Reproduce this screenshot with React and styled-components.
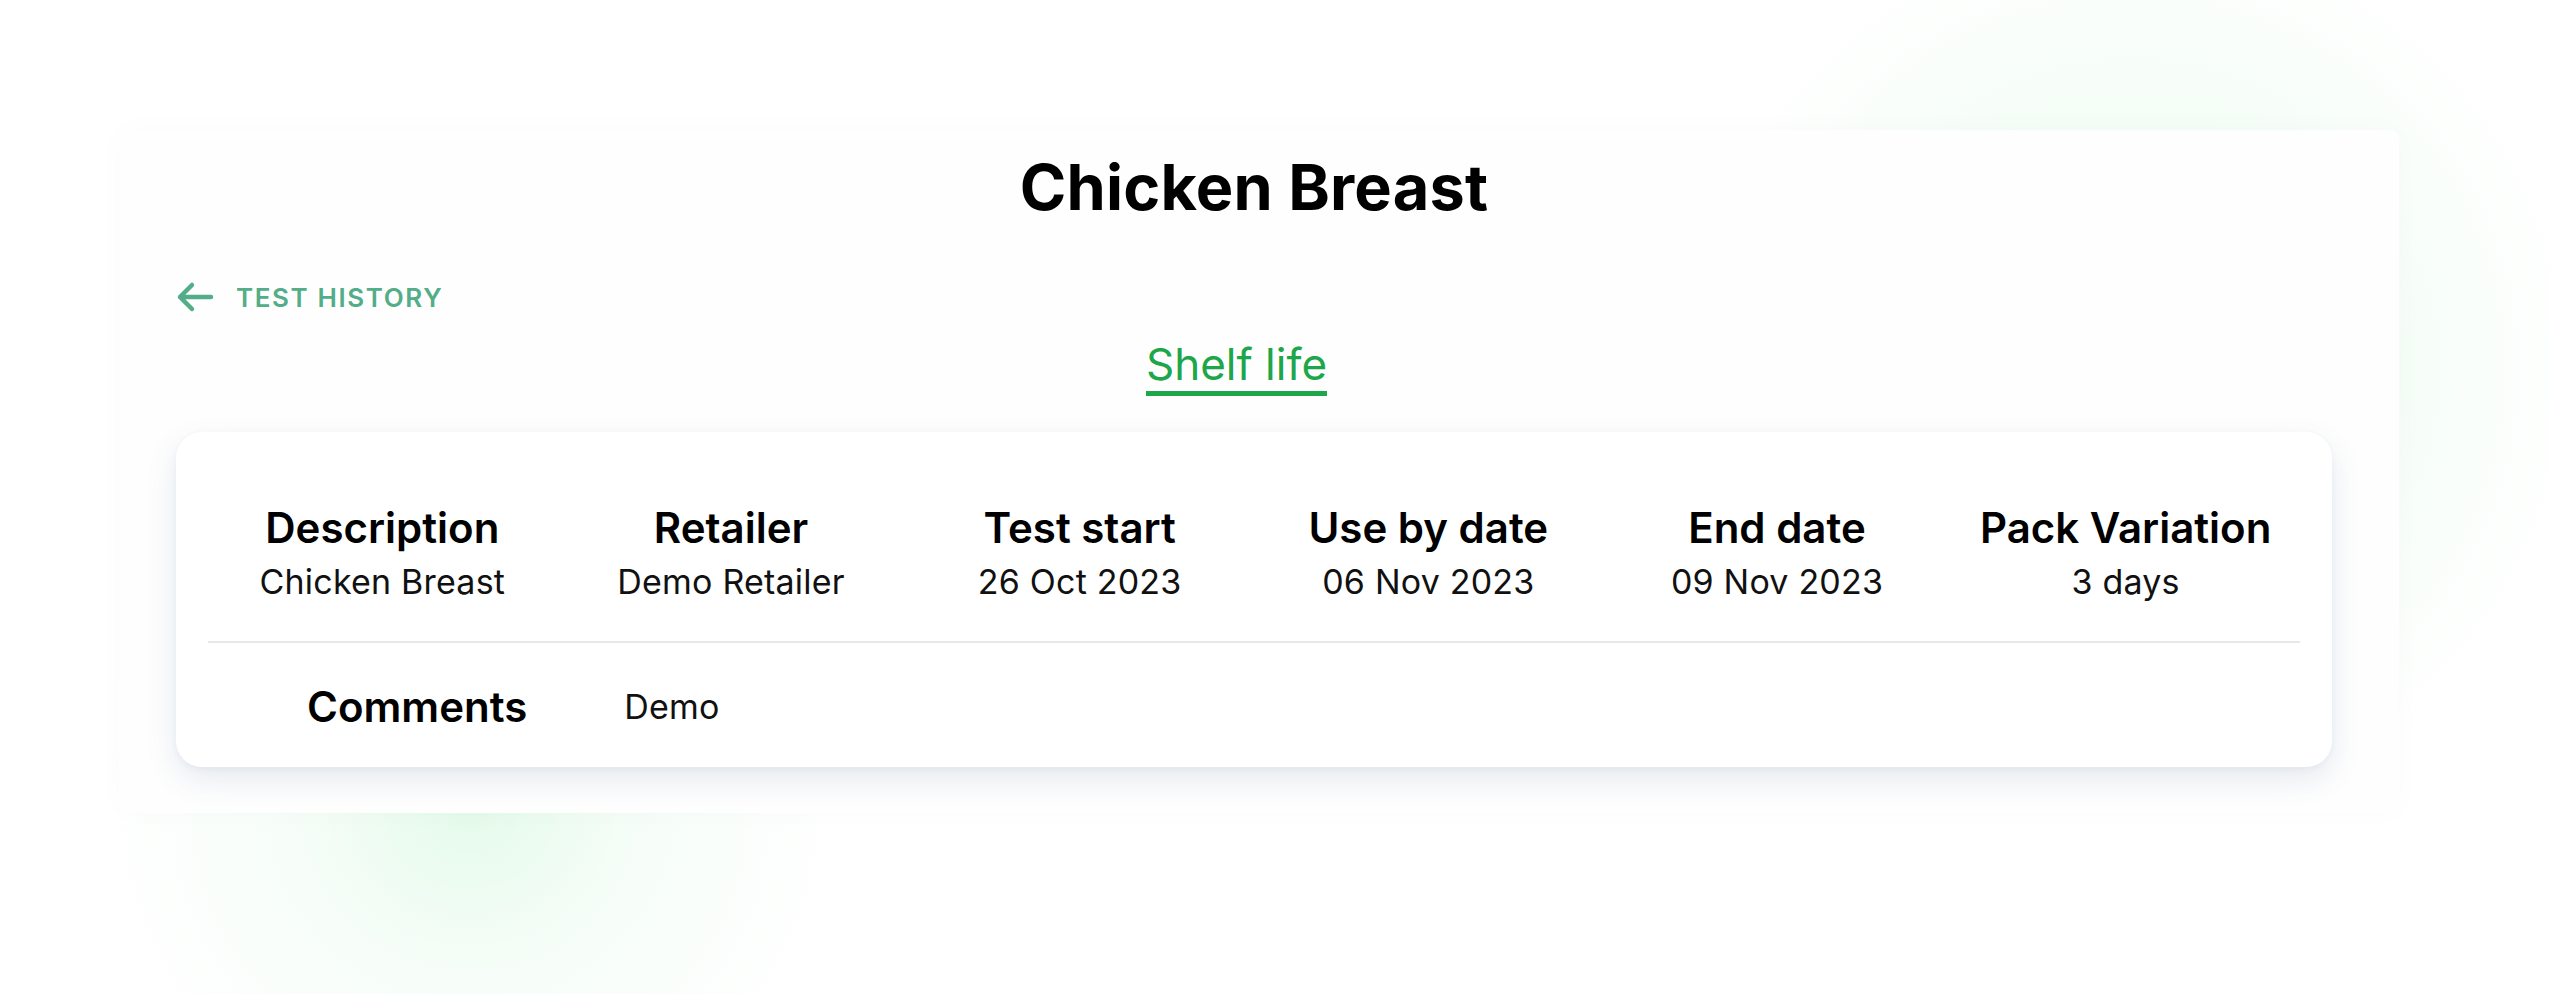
import React from "react";
import styled, { createGlobalStyle } from "styled-components";

const GlobalStyle = createGlobalStyle`
  html, body {
    margin: 0;
    padding: 0;
    background: #ffffff;
  }
  body {
    font-family: Inter, "Noto Sans", "Liberation Sans", sans-serif;
    color: #000;
  }
`;

const details = [
  { label: "Description", value: "Chicken Breast" },
  { label: "Retailer", value: "Demo Retailer" },
  { label: "Test start", value: "26 Oct 2023" },
  { label: "Use by date", value: "06 Nov 2023" },
  { label: "End date", value: "09 Nov 2023" },
  { label: "Pack Variation", value: "3 days" },
];

function BackArrow() {
  return (
    <svg width="38" height="32" viewBox="0 0 38 32" fill="none">
      <path
        d="M35 16H4M16 4L4 16l12 12"
        stroke="currentColor"
        strokeWidth="4.5"
        strokeLinecap="round"
        strokeLinejoin="round"
      />
    </svg>
  );
}

export default function App() {
  return (
    <>
      <GlobalStyle />
      <Page>
        <Panel>
          <Title>Chicken Breast</Title>
          <BackLink>
            <BackArrow />
            <span>Test history</span>
          </BackLink>
          <Tabs>
            <Tab active>Shelf life</Tab>
          </Tabs>
          <Card>
            <InfoGrid>
              {details.map((d) => (
                <InfoCell key={d.label}>
                  <Label>{d.label}</Label>
                  <Value>{d.value}</Value>
                </InfoCell>
              ))}
            </InfoGrid>
            <Divider />
            <CommentRow>
              <Label>Comments</Label>
              <Value>Demo</Value>
            </CommentRow>
          </Card>
        </Panel>
      </Page>
    </>
  );
}

const Page = styled.div`
  width: 2550px;
  height: 994px;
  overflow: hidden;
  box-sizing: border-box;
  padding: 130px 0 0 119px;
  background:
    radial-gradient(
      circle at 2130px 370px,
      rgba(170, 240, 190, 0.4) 0,
      rgba(200, 245, 210, 0.22) 220px,
      rgba(255, 255, 255, 0) 460px
    ),
    radial-gradient(
      circle at 470px 800px,
      rgba(175, 240, 195, 0.34) 0,
      rgba(205, 245, 215, 0.18) 170px,
      rgba(255, 255, 255, 0) 380px
    ),
    #ffffff;
`;

const Panel = styled.div`
  width: 2280px;
  box-sizing: border-box;
  padding: 23px 67px 46px 57px;
  background: #fefefe;
  border-radius: 8px;
  box-shadow: 0 0 30px rgba(40, 60, 90, 0.02);
  display: flex;
  flex-direction: column;
`;

const Title = styled.h1`
  margin: 0;
  text-align: center;
  font-size: 63px;
  line-height: 68px;
  font-weight: 700;
  color: #000;
  letter-spacing: 0.2px;
`;

const BackLink = styled.a`
  margin-top: 61px;
  align-self: flex-start;
  display: flex;
  align-items: center;
  gap: 22px;
  height: 30px;
  color: #52ad88;
  font-size: 26px;
  font-weight: 600;
  text-transform: uppercase;
  letter-spacing: 1.6px;
  cursor: pointer;
`;

const Tabs = styled.div`
  margin: 27px 35px 0 0;
  display: flex;
  justify-content: center;
`;

const Tab = styled.div`
  font-size: 44px;
  line-height: 50px;
  padding-bottom: 2px;
  color: ${(p) => (p.active ? "#1da64a" : "#555")};
  border-bottom: 5px solid ${(p) => (p.active ? "#1da64a" : "transparent")};
`;

const Card = styled.div`
  margin-top: 36px;
  background: #ffffff;
  border-radius: 26px;
  padding: 72px 32px 36px;
  box-shadow: 0 12px 30px rgba(60, 90, 140, 0.13), 0 2px 6px rgba(60, 90, 140, 0.05);
`;

const InfoGrid = styled.div`
  display: grid;
  grid-template-columns: repeat(6, 1fr);
`;

const InfoCell = styled.div`
  display: flex;
  flex-direction: column;
  align-items: center;
  gap: 10px;
`;

const Label = styled.div`
  font-size: 42px;
  line-height: 48px;
  font-weight: 600;
  color: #000;
  white-space: nowrap;
`;

const Value = styled.div`
  font-size: 34px;
  line-height: 40px;
  font-weight: 400;
  color: #111;
  white-space: nowrap;
  letter-spacing: 0.2px;
`;

const Divider = styled.div`
  margin: 39px 0 40px;
  height: 2px;
  background: #e6e8ec;
`;

const CommentRow = styled.div`
  display: flex;
  align-items: center;
  gap: 97px;
  padding-left: 99px;
`;
